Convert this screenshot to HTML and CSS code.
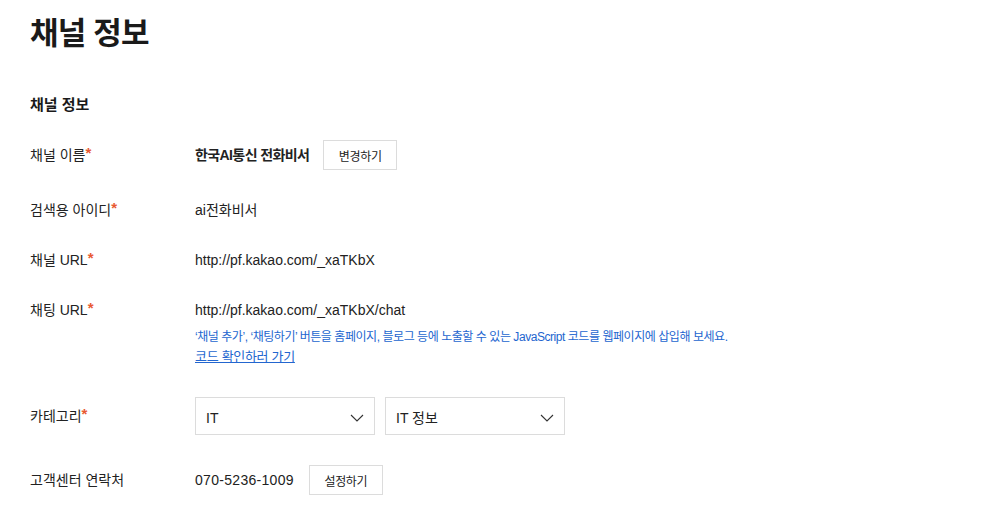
FILE: index.html
```html
<!DOCTYPE html>
<html lang="ko">
<head>
<meta charset="utf-8">
<title>채널 정보</title>
<link rel="stylesheet" href="styles.css">
</head>
<body>
<main class="page">
  <h1 class="title">채널 정보</h1>
  <h2 class="section">채널 정보</h2>
  <div class="form">
    <div class="row">
      <div class="label">채널 이름<span class="req">*</span></div>
      <div class="value">
        <strong class="name">한국AI통신 전화비서</strong>
        <button class="btn" type="button">변경하기</button>
      </div>
    </div>
    <div class="row">
      <div class="label">검색용 아이디<span class="req">*</span></div>
      <div class="value">ai전화비서</div>
    </div>
    <div class="row">
      <div class="label">채널 URL<span class="req">*</span></div>
      <div class="value">http://pf.kakao.com/_xaTKbX</div>
    </div>
    <div class="row top">
      <div class="label">채팅 URL<span class="req">*</span></div>
      <div class="value col">
        <div>http://pf.kakao.com/_xaTKbX/chat</div>
        <p class="help">‘채널 추가’, ‘채팅하기’ 버튼을 홈페이지, 블로그 등에 노출할 수 있는 JavaScript 코드를 웹페이지에 삽입해 보세요.</p>
        <a class="link" href="#">코드 확인하러 가기</a>
      </div>
    </div>
    <div class="row">
      <div class="label">카테고리<span class="req">*</span></div>
      <div class="value selects">
        <div class="select"><span class="opt">IT</span><svg class="chev" width="14" height="8" viewBox="0 0 14 8"><path d="M1 1 L7 7 L13 1" fill="none" stroke="#333" stroke-width="1.1"/></svg></div>
        <div class="select"><span class="opt">IT 정보</span><svg class="chev" width="14" height="8" viewBox="0 0 14 8"><path d="M1 1 L7 7 L13 1" fill="none" stroke="#333" stroke-width="1.1"/></svg></div>
      </div>
    </div>
    <div class="row">
      <div class="label">고객센터 연락처</div>
      <div class="value">
        <span class="phone">070-5236-1009</span>
        <button class="btn" type="button">설정하기</button>
      </div>
    </div>
  </div>
</main>
</body>
</html>
```

FILE: styles.css
```css
* { box-sizing: border-box; }
html, body { margin: 0; background: #fff; }
body {
  font-family: "Liberation Sans", "Noto Sans CJK KR", sans-serif;
  color: #222;
  font-size: 14px;
}
.page { padding: 11px 30px 0; }
.title {
  margin: 0;
  font-family: "Noto Sans CJK KR", sans-serif;
  font-size: 31px;
  line-height: 40px;
  font-weight: 700;
  letter-spacing: -0.8px;
  color: #1a1a1a;
}
.section {
  margin: 42px 0 0;
  font-family: "Noto Sans CJK KR", sans-serif;
  font-size: 15px;
  line-height: 22px;
  font-weight: 700;
  color: #1a1a1a;
}
.form {
  margin-top: 25px;
  display: flex;
  flex-direction: column;
  gap: 30px;
}
.row { display: flex; align-items: center; }
.row.top { align-items: flex-start; }
.label {
  width: 165px;
  flex: none;
  line-height: 20px;
  font-size: 14px;
  color: #222;
}
.req {
  color: #e85a33;
  font-weight: 700;
  font-size: 15px;
  position: relative;
  top: -2px;
}
.value { display: flex; align-items: center; line-height: 20px; }
.value.col { flex-direction: column; align-items: flex-start; }
.name { font-weight: 700; font-size: 14px; letter-spacing: -0.6px; margin-right: 14px; }
.btn {
  height: 30px;
  width: 74px;
  padding: 0;
  border: 1px solid #dcdcdc;
  background: #fff;
  font-family: "Noto Sans CJK KR", sans-serif;
  font-size: 12px;
  letter-spacing: -0.3px;
  color: #222;
  white-space: nowrap;
  cursor: pointer;
}
.phone { margin-right: 15px; letter-spacing: 0.3px; }
.help {
  margin: 7px 0 0;
  font-size: 12px;
  letter-spacing: -0.45px;
  line-height: 20px;
  color: #2366cf;
}
.link {
  font-size: 13px;
  letter-spacing: -0.3px;
  line-height: 20px;
  color: #2366cf;
  text-decoration: underline;
}
.selects { gap: 10px; }
.select {
  width: 180px;
  height: 38px;
  border: 1px solid #dcdcdc;
  display: flex;
  align-items: center;
  justify-content: space-between;
  padding: 3px 10px 0 10px;
  font-size: 14px;
}
.chev { display: block; }
```
